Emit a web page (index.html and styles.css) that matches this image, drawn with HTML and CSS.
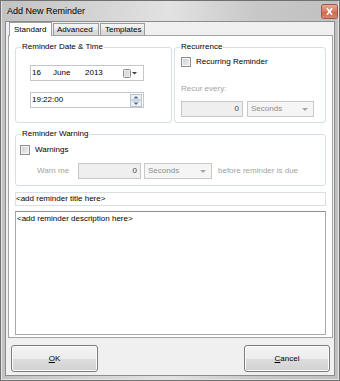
FILE: index.html
```html
<!DOCTYPE html>
<html lang="en">
	<head>
		<meta charset="utf-8">
		<title>Add New Reminder</title>
		<link rel="stylesheet" href="styles.css">
	</head>
	<body>
		<div class="window">
			<div class="titlebar">
				<span class="title">Add New Reminder</span>
				<span class="close">
					<svg width="15" height="13" viewBox="0 0 15 13">
						<path d="M5.5 4 L9.5 9 M9.5 4 L5.5 9" stroke="#fff" stroke-width="1.7" stroke-linecap="square"/>
					</svg>
				</span>
			</div>
			<div class="client">
				<div class="tabs">
					<div class="tab active">Standard</div>
					<div class="tab">Advanced</div>
					<div class="tab">Templates</div>
				</div>
				<div class="panel">
					<div class="top-row">
						<fieldset class="group group-date">
							<legend>Reminder Date &amp; Time</legend>
							<div class="date-body">
								<div class="field date-field">
									<span class="d-day">16</span>
									<span class="d-month">June</span>
									<span class="d-year">2013</span>
									<span class="cal-btn">
										<svg width="16" height="10" viewBox="0 0 16 10">
											<rect x="0.5" y="0.5" width="7" height="8" rx="1" fill="#f1f1f1" stroke="#8d8d8d"/>
											<rect x="1.5" y="1.5" width="5" height="6" fill="#dcdcdc"/>
											<path d="M9 3 L14 3 L11.5 5.5 Z" fill="#3c3c3c"/>
										</svg>
									</span>
								</div>
								<div class="field time-field">
									<span class="time-text">19:22:00</span>
									<span class="spin">
										<svg width="12" height="13" viewBox="0 0 12 13">
											<rect x="0.5" y="0.5" width="11" height="5.5" fill="#eef1f5" stroke="#b9c3cf"/>
											<rect x="0.5" y="7" width="11" height="5.5" fill="#eef1f5" stroke="#b9c3cf"/>
											<path d="M3.5 4.5 L6 2 L8.5 4.5 Z" fill="#4d6f93"/>
											<path d="M3.5 8.5 L6 11 L8.5 8.5 Z" fill="#4d6f93"/>
										</svg>
									</span>
								</div>
							</div>
						</fieldset>
						<fieldset class="group group-recur">
							<legend>Recurrence</legend>
							<div class="check recur-check"><span class="box"></span>Recurring Reminder</div>
							<div class="dim recur-label">Recur every:</div>
							<div class="recur-row">
								<div class="num recur-num">0</div>
								<div class="combo recur-combo">Seconds<span class="arrow"></span></div>
							</div>
						</fieldset>
					</div>
					<fieldset class="group group-warn">
						<legend>Reminder Warning</legend>
						<div class="check warn-check"><span class="box"></span>Warnings</div>
						<div class="warn-row">
							<span class="dim warn-label">Warn me</span>
							<div class="num warn-num">0</div>
							<div class="combo warn-combo">Seconds<span class="arrow"></span></div>
							<span class="dim warn-after">before reminder is due</span>
						</div>
					</fieldset>
					<div class="textbox">&lt;add reminder title here&gt;</div>
					<div class="textarea">&lt;add reminder description here&gt;</div>
				</div>
				<div class="buttons">
					<button class="btn btn-ok"><u>O</u>K</button>
					<button class="btn btn-cancel"><u>C</u>ancel</button>
				</div>
			</div>
		</div>
	</body>
</html>
```

FILE: styles.css
```css
body {
	margin: 0;
	font-family: 'Liberation Sans', Arial, sans-serif;
	font-size: 8px;
	line-height: 10px;
	color: #000;
	background-color: #fff;
}

/* Window frame */

.window {
	width: 340px;
	height: 381px;
	box-sizing: border-box;
	border: 1px solid #707070;
	padding: 0 4px 4px;
	display: flex;
	flex-direction: column;
	background-color: #c9c9c9;
	background-image: linear-gradient(to right, #c2c2c2, #d2d2d2 25%, #e2e2e2 50%, #c8c8c8 75%, #c0c0c0);
	box-shadow: inset 1px 0 0 #e4e4e4, inset -1px 0 0 #e4e4e4, inset 0 -1px 0 #e4e4e4;
}

.titlebar {
	height: 20px;
	flex: none;
	display: flex;
	align-items: center;
	justify-content: space-between;
}

.title {
	margin-left: 2px;
	font-size: 9px;
	color: #000;
}

.close {
	width: 15px;
	height: 13px;
	margin-right: -2px;
	margin-top: 1px;
	box-sizing: border-box;
	display: flex;
	border-radius: 2px;
	background-image: linear-gradient(to bottom, #eaa592, #da7a62 50%, #cf6249 51%, #dc836b);
	box-shadow: 0 0 0 1px #9b5a4c;
}

.client {
	flex: 1;
	border: 1px solid #8c8c8c;
	background-color: #f0f0f0;
	padding: 0 1px 3px 2px;
	display: flex;
	flex-direction: column;
}

/* Tabs */

.tabs {
	height: 13px;
	flex: none;
	display: flex;
	align-items: flex-end;
	padding-left: 1px;
	position: relative;
	z-index: 1;
}

.tab {
	height: 12px;
	box-sizing: border-box;
	border: 1px solid #9c9c9c;
	border-bottom: none;
	padding-left: 3px;
	line-height: 12px;
	background-image: linear-gradient(to bottom, #f5f5f5, #e9e9e9 50%, #dedede 51%, #d9d9d9);
	margin-right: 1px;
}

.tab:nth-child(2) {
	width: 46px;
}

.tab:nth-child(3) {
	width: 45px;
	padding-left: 4px;
}

.tab.active {
	width: 43px;
	height: 14px;
	margin-right: 1px;
	margin-bottom: -1px;
	background: #fff;
	padding-left: 4px;
	line-height: 13px;
}

.panel {
	flex: 1;
	border: 1px solid #a3a3a3;
	background-color: #fff;
	padding: 6px 6px 2px;
	display: flex;
	flex-direction: column;
}

/* Group boxes */

.group {
	margin: 0;
	min-width: 0;
	border: 1px solid #d5dfe5;
	border-radius: 3px;
	padding: 0 0 0 5px;
}

.group legend {
	padding: 0 1px;
	line-height: 10px;
}

.top-row {
	display: flex;
	gap: 2px;
}

.group-date {
	width: 157px;
	box-sizing: border-box;
	flex: none;
}

.group-recur {
	flex: 1;
	padding-bottom: 5px;
}

.date-body {
	padding: 13px 0 14px 9px;
	display: flex;
	flex-direction: column;
	gap: 11px;
}

.field {
	width: 114px;
	height: 16px;
	box-sizing: border-box;
	border: 1px solid #c3c7cc;
	background: #fff;
	display: flex;
	align-items: center;
	padding-left: 1px;
}

.d-day {
	width: 21px;
}

.d-month {
	width: 32px;
}

.d-year {
	width: 38px;
}

.cal-btn {
	display: flex;
	margin-top: 1px;
}

.time-text {
	flex: 1;
}

.spin {
	display: flex;
	margin-right: 1px;
}

/* Checkboxes */

.check {
	display: flex;
	align-items: center;
	height: 10px;
	gap: 5px;
}

.box {
	width: 10px;
	height: 10px;
	box-sizing: border-box;
	border: 1px solid #8e8f8f;
	background-image: linear-gradient(to bottom right, #cbcbcb, #e3e3e3 60%, #f4f4f4);
	box-shadow: inset 0 0 0 1px #f4f4f4;
}

.recur-check {
	margin: 5px 0 0 1px;
}

.dim {
	color: #a3a3a3;
}

.recur-label {
	margin: 17px 0 0 1px;
}

.recur-row {
	margin: 7px 0 0 1px;
	display: flex;
	gap: 4px;
}

.num {
	height: 16px;
	box-sizing: border-box;
	border: 1px solid #c6c6c6;
	background-color: #efefef;
	text-align: right;
	padding-right: 3px;
	line-height: 14px;
	color: #444;
}

.combo {
	height: 16px;
	box-sizing: border-box;
	border: 1px solid #c9c9c9;
	background-color: #f5f5f5;
	padding-left: 3px;
	line-height: 14px;
	color: #8d8d8d;
	display: flex;
	align-items: center;
	justify-content: space-between;
}

.arrow {
	width: 0;
	height: 0;
	margin-right: 5px;
	border-style: solid;
	border-width: 3px 3px 0 3px;
	border-color: #a5a5a5 transparent transparent transparent;
}

.recur-num {
	width: 62px;
}

.recur-combo {
	width: 67px;
}

.group-warn {
	margin-top: 6px;
	padding-bottom: 6px;
}

.warn-check {
	margin: 6px 0 0 -1px;
}

.warn-row {
	margin-top: 8px;
	display: flex;
	align-items: center;
}

.warn-label {
	width: 41px;
	margin-left: 16px;
}

.warn-num {
	width: 63px;
}

.warn-combo {
	width: 68px;
	margin-left: 3px;
}

.warn-after {
	margin-left: 6px;
}

/* Text entry */

.textbox {
	margin-top: 6px;
	height: 14px;
	box-sizing: border-box;
	border: 1px solid #dadfe4;
	line-height: 12px;
	padding-left: 0;
}

.textarea {
	margin-top: 5px;
	flex: 1;
	border: 1px solid #a9a9a9;
	border-top-color: #8f8f8f;
	padding: 2px 1px;
}

/* Buttons */

.buttons {
	margin-top: 7px;
	height: 27px;
	flex: none;
	display: flex;
	justify-content: space-between;
	padding: 0 3px 0 3px;
}

.btn {
	height: 27px;
	box-sizing: border-box;
	border: 1px solid #7d7d7d;
	border-radius: 3px;
	font-family: 'Liberation Sans', Arial, sans-serif;
	font-size: 8px;
	color: #000;
	padding: 0;
	background-image: linear-gradient(to bottom, #f4f4f4, #ececec 50%, #dddddd 51%, #d2d2d2);
	box-shadow: inset 0 0 0 1px #fbfbfb;
}

.btn-ok {
	width: 87px;
}

.btn-cancel {
	width: 86px;
}
```
